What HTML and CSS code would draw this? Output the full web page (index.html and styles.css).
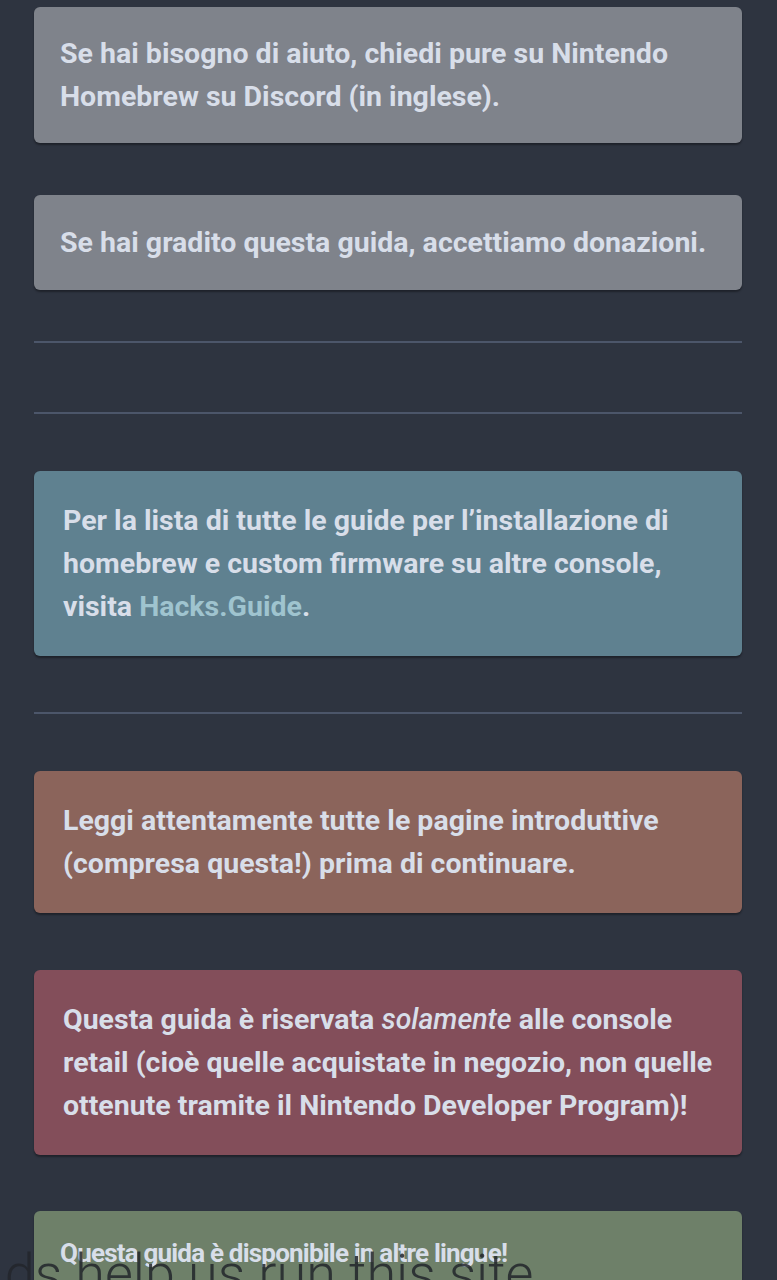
FILE: index.html
```html
<!DOCTYPE html>
<html lang="it">
<head>
<meta charset="utf-8">
<title>Guida</title>
<link rel="stylesheet" href="styles.css">
</head>
<body>
<main class="content">
  <div class="card card-gray card-first">
    <p>Se hai bisogno di aiuto, chiedi pure su Nintendo Homebrew su Discord (in inglese).</p>
  </div>
  <div class="card card-gray card-second">
    <p>Se hai gradito questa guida, accettiamo donazioni.</p>
  </div>
  <hr class="rule rule-a">
  <hr class="rule rule-b">
  <div class="card card-info">
    <p>Per la lista di tutte le guide per l’installazione di homebrew e custom firmware su altre console, visita <a class="link" href="#">Hacks.Guide</a>.</p>
  </div>
  <hr class="rule rule-c">
  <div class="card card-warn">
    <p>Leggi attentamente tutte le pagine introduttive (compresa questa!) prima di continuare.</p>
  </div>
  <div class="card card-danger">
    <p>Questa guida è riservata <em>solamente</em> alle console retail (cioè quelle acquistate in negozio, non quelle ottenute tramite il Nintendo Developer Program)!</p>
  </div>
  <div class="card card-success">
    <p class="small">Questa guida è disponibile in altre lingue!</p>
  </div>
</main>
<div class="ad-banner">Ads help us run this site</div>
</body>
</html>
```

FILE: styles.css
```css
html, body {
  margin: 0;
  padding: 0;
  background: #2e3440;
}
body {
  font-family: Roboto, "Noto Sans", sans-serif;
  color: #d8dee9;
  overflow: hidden;
  height: 1280px;
}
.content {
  padding: 7px 35px 0 34px;
  display: flex;
  flex-direction: column;
}
.card {
  border-radius: 6px;
  box-shadow: 0 2px 2px rgba(0, 0, 0, 0.35);
  padding: 28px 29px;
}
.card p {
  margin: 0;
  font-size: 28.5px;
  font-weight: 700;
  line-height: 43px;
}
.card-gray {
  background: #7f838b;
  padding: 25px 26px;
}
.card-second {
  margin-top: 52px;
  padding: 26px 26px;
}
.card-info {
  background: #5f8190;
  margin-top: 57px;
}
.card-warn {
  background: #8b645b;
  margin-top: 57px;
}
.card-danger {
  background: #834e5a;
  margin-top: 57px;
}
.card-success {
  background: #6e8069;
  margin-top: 56px;
  padding: 29px 26px;
  height: 200px;
}
.card p.small {
  font-size: 26px;
  line-height: 26px;
  letter-spacing: -0.8px;
}
.card em {
  font-style: italic;
  font-weight: 500;
}
.link {
  color: #9fc4cf;
  text-decoration: none;
}
.rule {
  border: 0;
  height: 2px;
  background: #4c566a;
  margin: 0;
}
.rule-a { margin-top: 51px; }
.rule-b { margin-top: 69px; }
.rule-c { margin-top: 56px; }
.ad-banner {
  position: fixed;
  left: -29px;
  bottom: -21px;
  font-family: Roboto, "Liberation Sans", sans-serif;
  font-weight: 300;
  font-size: 54px;
  color: rgba(34, 38, 44, 0.85);
  white-space: nowrap;
  line-height: 1;
}
```
